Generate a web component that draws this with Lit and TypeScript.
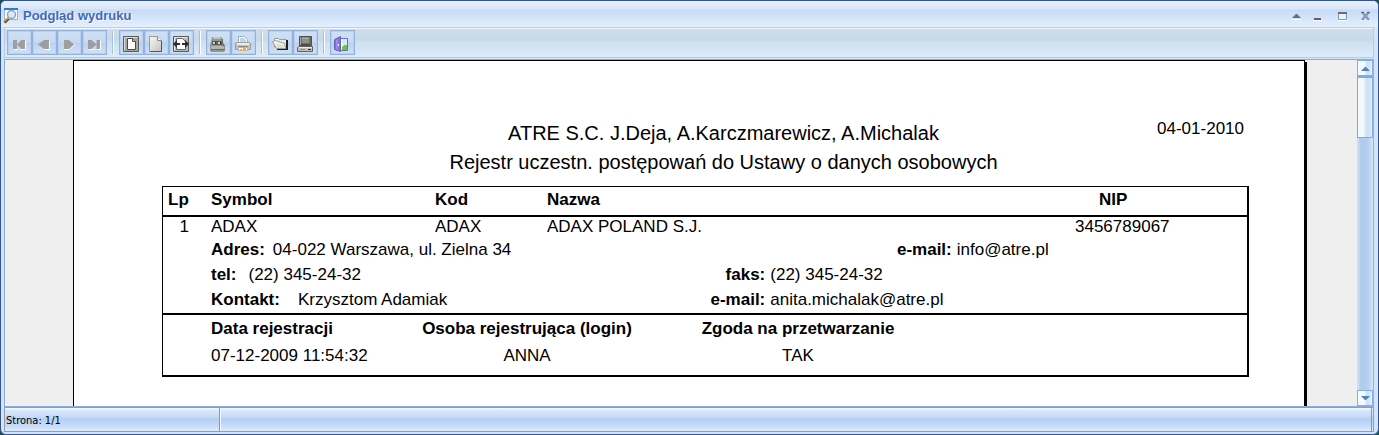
import { LitElement, html, css, svg, TemplateResult } from "lit";
import { customElement, property } from "lit/decorators.js";

const icons: Record<string, TemplateResult> = {
  first: svg`<path fill="#fff" d="M4 15h4v-1h2v1h6V6h-1v8H4z"/><path fill="#9e9e9e" d="M3 5h4v9H3zM7 9.500L11 5.500V5h4v9h-4v-.5z"/>`,
  prev: svg`<path fill="#fff" d="M5 11l5 4h5V6h-1v8h-4z"/><path fill="#9e9e9e" d="M3 9.500L9 5h5v9H9z"/>`,
  next: svg`<path fill="#fff" d="M4 15h5l6-5v-1l-6 5H4z"/><path fill="#9e9e9e" d="M4 5h5l5 4.500L9 14H4z"/>`,
  last: svg`<path fill="#fff" d="M4 15h4l4-1v1h4V6h-1v8H4z"/><path fill="#9e9e9e" d="M3 5h4v.5l4.500 4L7 13.500v.5H3zM11.500 5H15v9h-3.500z"/>`,
  fitPage: svg`<path fill="#a5a6a2" stroke="#5a5a58" d="M1.500 1.500h15v15h-15z"/><path fill="none" stroke="#deded8" d="M2.500 15.500v-13h13"/><path fill="#fff" stroke="#4a4a4a" d="M5.500 3.500h5l3 3v8h-8z"/><path fill="#ccc" stroke="#4a4a4a" d="M10.500 3.500v3h3"/>`,
  page: svg`<defs><linearGradient id="pg" x2="1" y2="1"><stop stop-color="#fafaf6"/><stop offset="1" stop-color="#c2c3bc"/></linearGradient></defs><path fill="url(#pg)" stroke="#98998f" d="M2.500 1.500h8l4 4v11h-12z"/><path fill="none" stroke="#55564f" d="M14.500 6v10.500H3"/><path fill="#f4f4ee" stroke="#8c8d86" d="M10.500 1.500v4h4"/>`,
  fitWidth: svg`<path fill="#b9bab4" stroke="#5a5a58" d="M1.500 1.500h15v15h-15z"/><path fill="none" stroke="#e8e8e2" d="M2.500 15.500v-13h13"/><path fill="#fff" stroke="#666" d="M4.500 3.500h6l3 3v8h-9z"/><path fill="#2e2e2e" d="M1 9l4-4v3h3v2H5v3zM17 9l-4-4v3h-3v2h3v3z"/>`,
  printSetup: svg`<path fill="#93938f" d="M3 2h9l2 2v4l2 3v5l-2 1H2l-1-2v-5l1-3z"/><path fill="#c4c4be" d="M4 2h7l1 2H4z"/><path fill="#5c5c59" d="M3 6h10v4H3z"/><path fill="#d4d4ce" d="M4 7h2v2H4zM9 7h2v2H9z"/><path fill="#2e2e2e" d="M6 7h1v2H6zM11 7h1v2h-1z"/><path fill="#b6b6b0" d="M2 11h12l1 1v2H2z"/><path fill="#6a6a66" d="M2 14h14v1H2zM13 4h1v4l2 3h-2l-1-2z"/>`,
  print: svg`<path fill="#f8fbff" stroke="#a0adbd" d="M4.500 7.500v-6h6l3 3v3z"/><path fill="#bcd7f2" d="M6 3h4l2 2v2H6z"/><path fill="#c0c0bd" stroke="#a0a09c" d="M2.500 7.500h13l1 1v6h-15v-6z"/><path fill="#ececea" d="M3 8h12v2H3z"/><path fill="#8b8b87" d="M4 11h10v1H4z"/><path fill="#fff" stroke="#b4b4b0" d="M4.500 12.500h9v3h-9z"/><path fill="#e7b13b" d="M6 14h2v2H6zM9 13h3v3H9z"/>`,
  open: svg`<path fill="#e7e7e3" stroke="#999a94" d="M3.500 12.500v-9h4l1 1h7v9"/><path fill="#202020" d="M15 5h2v10H6v-2h9z"/><path fill="#f4f4f0" stroke="#9c9d98" d="M1.500 6.500l3-1 9 3 1 5h-9z"/><path fill="#dededa" d="M5 8l7 2 1 3H6z"/><path fill="#fff" d="M4 4h3v1H4z"/>`,
  save: svg`<path fill="#6d6d6a" stroke="#4c4c4a" d="M3.500 1.500h12v9h-12z"/><path fill="#8f908b" d="M6 2h7v6H6z"/><path fill="#a9aaa5" d="M6 3h7v1H6z"/><path fill="#a9a9a4" d="M4 2h1v8H4z"/><path fill="#4a4a48" d="M5 9h9v1H5z"/><path fill="#c3c4be" stroke="#62625f" d="M2.500 11.500h14v5h-15v-4z"/><path fill="#ecece8" d="M3 12h13v1H3z"/><path fill="#888" d="M4 14h5v1H4z"/><path fill="#2b2b2b" d="M12 14h3v1h-3z"/>`,
  exit: svg`<path fill="#f6fbff" stroke="#7468c9" d="M7.500 3.500h7v12h-7z"/><path fill="#d4ecfa" d="M9 4h5v6H9z"/><path fill="#62cf25" d="M9 12l2-2h3v5H9z"/><path fill="#7c72d8" stroke="#6a60c2" d="M1.500 4.500l6-3v15l-6-2z"/><path fill="#978ee6" d="M3 5l2-1v11l-2-1z"/><path fill="#fff" d="M5 9h1v2H5z"/>`,
};

const toolGroups: { icon: string; label: string; disabled?: boolean }[][] = [
  [
    { icon: "first", label: "Pierwsza strona", disabled: true },
    { icon: "prev", label: "Poprzednia strona", disabled: true },
    { icon: "next", label: "Następna strona", disabled: true },
    { icon: "last", label: "Ostatnia strona", disabled: true },
  ],
  [
    { icon: "fitPage", label: "Cała strona" },
    { icon: "page", label: "Rozmiar rzeczywisty" },
    { icon: "fitWidth", label: "Szerokość strony" },
  ],
  [
    { icon: "printSetup", label: "Ustawienia drukarki" },
    { icon: "print", label: "Drukuj" },
  ],
  [
    { icon: "open", label: "Otwórz" },
    { icon: "save", label: "Zapisz" },
  ],
  [{ icon: "exit", label: "Zamknij podgląd" }],
];

@customElement("title-bar")
class TitleBar extends LitElement {
  static styles = css`
    :host { display: block; }
    .bar {
      display: flex; align-items: center; height: 26px; padding: 3px 4px 0 2px; box-sizing: border-box;
      background: linear-gradient(#e6effb 0 1px, #d9e6f9 8px, #c7dbf6 9px, #d9e8fb 20px, #e4f0fe);
    }
    .app { width: 16px; height: 16px; margin-right: 4px; }
    h1 { flex: 1; margin: 0; font: bold 13px/16px "Liberation Sans", Arial, sans-serif; color: #4469b2; text-shadow: 1px 1px #f4f9ff; }
    .controls { display: flex; gap: 6px; }
    button { width: 17px; height: 16px; padding: 0; border: 0; background: none; display: block; }
    svg { display: block; }
  `;
  render() {
    return html`<header class="bar">
      <svg class="app" viewBox="0 0 16 16" aria-hidden="true">
        <path fill="#fff" stroke="#8fb3dc" d="M1.500 .5h13v11h-13z" /><path fill="#2d7bd0" d="M1 0h14v2H1z" />
        <path stroke="#6f4320" stroke-width="3" d="M1.500 14.500l4-4" /><path stroke="#d89a45" stroke-width="1.500" d="M1.500 13.500l4-4" />
        <circle cx="8.500" cy="6.500" r="4" fill="#d5ecfa" stroke="#8ba3b8" stroke-width="1.500" />
      </svg>
      <h1>Podgląd wydruku</h1>
      <div class="controls">
        <button aria-label="Zwiń"><svg width="17" height="16"><path fill="#fff" d="M4 11h9v1H4z" /><path fill="#5b6f94" d="M4 10l4-4h1l4 4z" /></svg></button>
        <button aria-label="Minimalizuj"><svg width="17" height="16"><path fill="#fff" d="M3 12h8v1H3z" /><path fill="#5c6168" d="M3 10h7v2H3z" /></svg></button>
        <button aria-label="Maksymalizuj"><svg width="17" height="16"><path fill="none" stroke="#fff" d="M4.500 12.500h9" /><path fill="#e9f2fd" stroke="#8098c4" d="M4.500 5.500h8v6h-8z" /><path fill="#6a6a70" d="M4 4h9v2H4z" /></svg></button>
        <button aria-label="Zamknij"><svg width="17" height="16"><path fill="#fff" d="M4 12h4v1H4zM10 12h4v1h-4z" /><path stroke="#8298bf" stroke-width="2.500" d="M5 4l7 8M12 4l-7 8" /><path fill="#666b77" d="M4 4h3v1H4zM10 4h3v1h-3z" /></svg></button>
      </div>
    </header>`;
  }
}

@customElement("tool-bar")
class ToolBar extends LitElement {
  static styles = css`
    :host { display: block; }
    .bar {
      display: flex; height: 31px; box-sizing: border-box; padding: 2px;
      border: 1px solid #bccce0; box-shadow: inset 0 1px #f3f8fe;
      background: linear-gradient(#cfdeed, #c9d9e9 12px, #cfe0ef 14px, #dcebfa);
    }
    .group { display: flex; align-items: center; }
    .group + .group::before { content: ""; width: 1px; height: 23px; margin: 0 5px; background: #fff; border-left: 1px solid #a3bfe2; }
    button {
      display: block; width: 25px; height: 25px; padding: 2px 0 0 2px;
      border: 1px solid #93b3de; box-shadow: inset 0 0 0 1px #b9d0f0;
      background: linear-gradient(#cfe0f5, #c8dbf2 11px, #bad1ee 12px, #d0e2f8);
    }
    svg { display: block; }
  `;
  render() {
    return html`<nav class="bar" aria-label="Narzędzia podglądu">
      ${toolGroups.map((group) => html`<div class="group">
        ${group.map((t) => html`<button aria-label=${t.label} title=${t.label} ?disabled=${t.disabled}>
          <svg width="18" height="18" viewBox="0 0 18 18" aria-hidden="true">${icons[t.icon]}</svg>
        </button>`)}
      </div>`)}
    </nav>`;
  }
}

@customElement("report-page")
class ReportPage extends LitElement {
  static styles = css`
    :host { display: block; }
    .paper {
      min-height: 700px; box-sizing: border-box; padding: 58px 55px 0 88px;
      background: #fff; border: 1px solid #000; box-shadow: 2px 2px #000;
      font: 17px/25px "Liberation Sans", Arial, sans-serif; color: #000;
    }
    .head { display: grid; grid-template-columns: 36px 1fr; margin-bottom: 9px; }
    .titles { grid-area: 1 / 2; text-align: center; font-size: 20px; line-height: 29px; }
    h2, p { margin: 0; font: inherit; }
    .date { grid-area: 1 / 1 / 2 / 3; justify-self: end; padding-right: 5px; line-height: 20px; }
    table { width: 100%; border-collapse: collapse; table-layout: fixed; }
    .register { border: 1px solid #000; border-right-width: 2px; border-bottom-width: 2px; }
    th, td { padding: 0; text-align: left; }
    .register > thead th { height: 28px; line-height: 26px; vertical-align: top; border-bottom: 2px solid #000; }
    .lp { width: 48px; }
    .symbol { width: 224px; }
    .kod { width: 112px; }
    .nip { width: 172px; }
    th.lp { text-indent: 5px; }
    th.nip { text-indent: 24px; }
    .num { text-align: right; padding-right: 22px; }
    .main td { height: 20px; line-height: 20px; }
    dl { margin: 0; padding-bottom: 1px; }
    .line { display: grid; grid-template-columns: 48% 1fr; line-height: 25px; }
    .line.wide { grid-template-columns: 66% 1fr; }
    .pair { display: flex; gap: 8px; }
    .pair + .pair { gap: 5px; }
    dt { font-weight: bold; }
    dd { margin: 0; }
    .line .pair + .pair dt { width: 57px; text-align: right; white-space: nowrap; }
    .gap { margin-left: 4px; }
    .gap-wide { margin-left: 10px; }
    .consent-cell { border-top: 2px solid #000; padding: 0 0 6px; }
    .consent { width: auto; }
    .consent th, .consent td { line-height: 27px; text-align: center; white-space: nowrap; }
    .consent .when { width: 194px; text-align: left; }
    .consent .who { width: 244px; }
    .consent .agree { width: 298px; }
  `;
  render() {
    return html`<article class="paper">
      <header class="head">
        <div class="titles">
          <p>ATRE S.C. J.Deja, A.Karczmarewicz, A.Michalak</p>
          <h2>Rejestr uczestn. postępowań do Ustawy o danych osobowych</h2>
        </div>
        <time class="date" datetime="2010-01-04">04-01-2010</time>
      </header>
      <table class="register">
        <thead>
          <tr><th class="lp">Lp</th><th class="symbol">Symbol</th><th class="kod">Kod</th><th>Nazwa</th><th class="nip">NIP</th></tr>
        </thead>
        <tbody>
          <tr class="main"><td class="num">1</td><td>ADAX</td><td>ADAX</td><td>ADAX POLAND S.J.</td><td>3456789067</td></tr>
          <tr>
            <td></td>
            <td colspan="4">
              <dl>
                <div class="line wide">
                  <div class="pair"><dt>Adres:</dt><dd>04-022 Warszawa, ul. Zielna 34</dd></div>
                  <div class="pair"><dt>e-mail:</dt><dd>info@atre.pl</dd></div>
                </div>
                <div class="line">
                  <div class="pair"><dt>tel:</dt><dd class="gap">(22) 345-24-32</dd></div>
                  <div class="pair"><dt>faks:</dt><dd>(22) 345-24-32</dd></div>
                </div>
                <div class="line">
                  <div class="pair"><dt>Kontakt:</dt><dd class="gap-wide">Krzysztom Adamiak</dd></div>
                  <div class="pair"><dt>e-mail:</dt><dd>anita.michalak@atre.pl</dd></div>
                </div>
              </dl>
            </td>
          </tr>
          <tr>
            <td class="consent-cell"></td>
            <td class="consent-cell" colspan="4">
              <table class="consent">
                <thead><tr><th class="when">Data rejestracji</th><th class="who">Osoba rejestrująca (login)</th><th class="agree">Zgoda na przetwarzanie</th></tr></thead>
                <tbody><tr><td class="when">07-12-2009 11:54:32</td><td>ANNA</td><td>TAK</td></tr></tbody>
              </table>
            </td>
          </tr>
        </tbody>
      </table>
    </article>`;
  }
}

@customElement("scroll-rail")
class ScrollRail extends LitElement {
  static styles = css`
    :host { display: flex; }
    .rail {
      flex: 1; display: flex; flex-direction: column; box-sizing: border-box; width: 17px;
      border-right: 1px solid #8fb5e6; background: linear-gradient(90deg, #d3e4f8, #aecbec 4px, #b4d0f0 11px, #d5e6f9);
    }
    button {
      display: grid; place-items: center; height: 16px; padding: 0; border: 1px solid #86aee0;
      background: linear-gradient(90deg, #f4f9fe 0 7px, #d2e3f7 8px 11px, #eaf3fd);
    }
    .thumb { height: 62px; box-sizing: border-box; border: 1px solid #7fa9dd; border-top-width: 2px; background: linear-gradient(90deg, #f4f9fe 0 5px, #e1edfb 7px, #cfe1f6 8px 12px, #e8f2fd); }
    .space { flex: 1; }
  `;
  render() {
    return html`<div class="rail">
      <button aria-label="W górę"><svg width="9" height="5"><path fill="#4d84bd" d="M0 5l4-4h1l4 4z" /></svg></button>
      <div class="thumb"></div>
      <div class="space"></div>
      <button aria-label="W dół"><svg width="9" height="5"><path fill="#4d84bd" d="M0 0h9L5 4H4z" /></svg></button>
    </div>`;
  }
}

@customElement("app-root")
class AppRoot extends LitElement {
  @property({ type: Number }) page = 1;
  @property({ type: Number }) pages = 1;

  static styles = css`
    :host { display: block; height: 100vh; background: #1c4f5c; }
    .window {
      display: flex; flex-direction: column; height: 100%; box-sizing: border-box; overflow: hidden;
      border: 1px solid #33568f; border-radius: 6px; background: #d3e4f9;
    }
    .body { flex: 1; min-height: 0; display: flex; flex-direction: column; margin: 0 4px 2px 3px; }
    .view { flex: 1; min-height: 0; display: flex; border: 1px solid #86aee0; border-right: 0; margin-top: 1px; background: #efefef; }
    .canvas { flex: 1; min-width: 0; overflow: hidden; padding: 0 52px 0 68px; }
    .status {
      display: flex; height: 25px; box-sizing: border-box; border: 1px solid #979ca5;
      background: linear-gradient(#f0f6fe 0 1px, #dbe8fb 2px, #c5daf7 9px, #b4d0f5 11px, #c6dcf8 18px, #dceafc);
      font: 11px/25px "DejaVu Sans Condensed", "DejaVu Sans", sans-serif; color: #000;
    }
    .cell { box-sizing: border-box; padding-left: 1px; }
    .page { width: 215px; border-right: 1px solid #7c9ac6; box-shadow: 1px 0 #f2f8ff; }
    .rest { flex: 1; border-right: 1px solid #7c9ac6; margin-right: 1px; }
  `;
  render() {
    return html`<main class="window">
      <title-bar></title-bar>
      <div class="body">
        <tool-bar></tool-bar>
        <section class="view">
          <div class="canvas"><report-page></report-page></div>
          <scroll-rail></scroll-rail>
        </section>
        <footer class="status">
          <div class="cell page">Strona: ${this.page}/${this.pages}</div>
          <div class="cell rest"></div>
        </footer>
      </div>
    </main>`;
  }
}
